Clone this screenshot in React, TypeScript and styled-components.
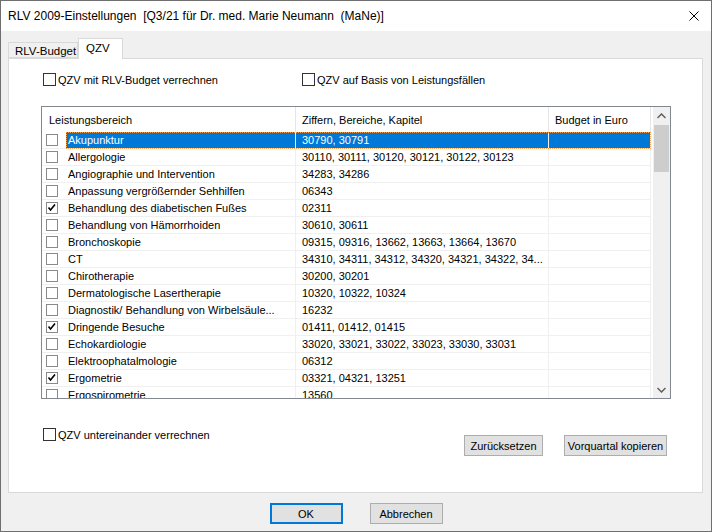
import React from 'react';
import styled, { createGlobalStyle } from 'styled-components';

const GlobalStyle = createGlobalStyle`
  html, body {
    margin: 0;
    padding: 0;
    background: #ffffff;
  }
  body {
    font-family: "Liberation Sans", Arial, sans-serif;
    font-size: 11px;
    color: #000000;
  }
`;

const Window = styled.div`
  width: 712px;
  height: 532px;
  box-sizing: border-box;
  border: 1px solid #6f6f6f;
  background: #f0f0f0;
  display: flex;
  flex-direction: column;
`;

const TitleBar = styled.div`
  height: 30px;
  flex-shrink: 0;
  background: #ffffff;
  display: flex;
  align-items: center;
  justify-content: space-between;
  padding-left: 7px;
`;

const Title = styled.span`
  font-size: 12px;
  white-space: pre;
`;

const CloseButton = styled.div`
  width: 30px;
  height: 30px;
  margin-right: 2px;
  display: flex;
  align-items: center;
  justify-content: center;
`;

const Body = styled.div`
  flex: 1;
  display: flex;
  flex-direction: column;
  padding: 7px 8px 0 7px;
`;

const TabStrip = styled.div`
  display: flex;
  align-items: flex-end;
  height: 20px;
  position: relative;
  z-index: 1;
`;

const Tab = styled.div<{ $active?: boolean; $width: number }>`
  box-sizing: border-box;
  width: ${p => p.$width}px;
  height: ${p => (p.$active ? 21 : 16)}px;
  margin-bottom: ${p => (p.$active ? -1 : 0)}px;
  border: 1px solid #d9d9d9;
  border-bottom: ${p => (p.$active ? 'none' : '1px solid #d9d9d9')};
  background: ${p => (p.$active ? '#ffffff' : '#f0f0f0')};
  padding: ${p => (p.$active ? '3px 0 0 7px' : '2px 0 0 6px')};
  font-size: 11.5px;
  line-height: 13px;
  white-space: nowrap;
  overflow: hidden;
`;

const Panel = styled.div`
  height: 435px;
  box-sizing: border-box;
  border: 1px solid #d9d9d9;
  background: #ffffff;
  display: flex;
  flex-direction: column;
`;

const OptionRow = styled.div`
  display: grid;
  grid-template-columns: 259px auto;
  margin: 14px 0 0 34px;
`;

const CheckLabel = styled.label`
  display: flex;
  align-items: center;
  gap: 2px;
  height: 13px;
  white-space: nowrap;
`;

const Box = styled.span`
  box-sizing: border-box;
  width: 13px;
  height: 13px;
  border: 1px solid #333333;
  background: #ffffff;
  flex-shrink: 0;
`;

const Table = styled.div`
  box-sizing: border-box;
  width: 630px;
  height: 293px;
  margin: 20px 0 0 32px;
  border: 1px solid #828790;
  display: flex;
  overflow: hidden;
`;

const GridArea = styled.div`
  flex: 1;
  overflow: hidden;
`;

const HeaderRow = styled.div`
  display: flex;
  height: 25px;
`;

const HeaderCell = styled.div<{ $width: number; $pad: number }>`
  box-sizing: border-box;
  width: ${p => p.$width}px;
  padding-left: ${p => p.$pad}px;
  border-right: 1px solid #e5e5e5;
  display: flex;
  align-items: center;
  white-space: nowrap;
`;

const Row = styled.div`
  display: flex;
  height: 17px;
`;

const CheckCell = styled.div`
  box-sizing: border-box;
  width: 24px;
  height: 17px;
  border-bottom: 1px solid #f0f0f0;
  padding: 2px 0 0 4px;
`;

const RowBody = styled.div<{ $selected?: boolean }>`
  display: flex;
  background: ${p => (p.$selected ? '#0078d7' : '#ffffff')};
  color: ${p => (p.$selected ? '#ffffff' : '#000000')};
  outline: ${p => (p.$selected ? '1px dotted #f2a04e' : 'none')};
  outline-offset: -1px;
`;

const Cell = styled.div<{ $width: number; $pad: number }>`
  box-sizing: border-box;
  width: ${p => p.$width}px;
  height: 17px;
  padding-left: ${p => p.$pad}px;
  border-right: 1px solid #f0f0f0;
  border-bottom: 1px solid #f0f0f0;
  line-height: 16px;
  white-space: nowrap;
  overflow: hidden;
`;

const RowBox = styled.span`
  display: block;
  box-sizing: border-box;
  width: 12px;
  height: 12px;
  border: 1px solid #8a8a8a;
  background: #ffffff;
  position: relative;
`;

const ScrollBar = styled.div`
  width: 17px;
  margin-left: 2px;
  background: #f0f0f0;
  display: flex;
  flex-direction: column;
  align-items: center;
`;

const ScrollArrow = styled.div`
  width: 17px;
  height: 17px;
  display: flex;
  align-items: center;
  justify-content: center;
`;

const ScrollThumb = styled.div`
  width: 15px;
  height: 47px;
  margin-top: 1px;
  background: #cdcdcd;
`;

const ScrollTrack = styled.div`
  flex: 1;
`;

const BottomRow = styled.div`
  display: flex;
  align-items: flex-start;
  margin: 29px 35px 0 34px;
`;

const ActionButtons = styled.div`
  display: flex;
  gap: 21px;
  margin-left: auto;
  margin-top: 7px;
`;

const Button = styled.button<{ $width: number; $default?: boolean }>`
  box-sizing: border-box;
  width: ${p => p.$width}px;
  height: 21px;
  padding: 0;
  border: ${p => (p.$default ? '2px solid #0078d7' : '1px solid #adadad')};
  background: #e1e1e1;
  font-family: "Liberation Sans", Arial, sans-serif;
  font-size: 11px;
  color: #000000;
`;

const Footer = styled.div`
  display: flex;
  justify-content: center;
  gap: 27px;
  margin-top: 10px;
  padding-left: 1px;
`;

type Entry = {
  name: string;
  codes: string;
  checked?: boolean;
};

const entries: Entry[] = [
  { name: 'Akupunktur', codes: '30790, 30791' },
  { name: 'Allergologie', codes: '30110, 30111, 30120, 30121, 30122, 30123' },
  { name: 'Angiographie und Intervention', codes: '34283, 34286' },
  { name: 'Anpassung vergrößernder Sehhilfen', codes: '06343' },
  { name: 'Behandlung des diabetischen Fußes', codes: '02311', checked: true },
  { name: 'Behandlung von Hämorrhoiden', codes: '30610, 30611' },
  { name: 'Bronchoskopie', codes: '09315, 09316, 13662, 13663, 13664, 13670' },
  { name: 'CT', codes: '34310, 34311, 34312, 34320, 34321, 34322, 34...' },
  { name: 'Chirotherapie', codes: '30200, 30201' },
  { name: 'Dermatologische Lasertherapie', codes: '10320, 10322, 10324' },
  { name: 'Diagnostik/ Behandlung von Wirbelsäule...', codes: '16232' },
  { name: 'Dringende Besuche', codes: '01411, 01412, 01415', checked: true },
  { name: 'Echokardiologie', codes: '33020, 33021, 33022, 33023, 33030, 33031' },
  { name: 'Elektroophatalmologie', codes: '06312' },
  { name: 'Ergometrie', codes: '03321, 04321, 13251', checked: true },
  { name: 'Ergospirometrie', codes: '13560' },
];

const Tick = () => (
  <svg width="10" height="10" viewBox="0 0 10 10" style={{ position: 'absolute', left: 0, top: 0 }}>
    <polyline points="1.5,4.5 3.5,7 8,1.5" fill="none" stroke="#000" strokeWidth="1.6" />
  </svg>
);

const App: React.FC = () => {
  return (
    <>
      <GlobalStyle />
      <Window>
        <TitleBar>
          <Title>RLV 2009-Einstellungen  [Q3/21 für Dr. med. Marie Neumann  (MaNe)]</Title>
          <CloseButton>
            <svg width="10" height="10" viewBox="0 0 10 10">
              <path d="M0.5 0.5 L9.5 9.5 M9.5 0.5 L0.5 9.5" stroke="#000" strokeWidth="1" />
            </svg>
          </CloseButton>
        </TitleBar>
        <Body>
          <TabStrip>
            <Tab $width={70}>RLV-Budget</Tab>
            <Tab $width={45} $active>QZV</Tab>
          </TabStrip>
          <Panel>
            <OptionRow>
              <CheckLabel>
                <Box />
                QZV mit RLV-Budget verrechnen
              </CheckLabel>
              <CheckLabel>
                <Box />
                QZV auf Basis von Leistungsfällen
              </CheckLabel>
            </OptionRow>
            <Table>
              <GridArea>
                <HeaderRow>
                  <HeaderCell $width={254} $pad={7}>Leistungsbereich</HeaderCell>
                  <HeaderCell $width={253} $pad={6}>Ziffern, Bereiche, Kapitel</HeaderCell>
                  <HeaderCell $width={102} $pad={6}>Budget in Euro</HeaderCell>
                </HeaderRow>
                {entries.map((entry, i) => (
                  <Row key={entry.name}>
                    <CheckCell>
                      <RowBox>{entry.checked && <Tick />}</RowBox>
                    </CheckCell>
                    <RowBody $selected={i === 0}>
                      <Cell $width={230} $pad={2}>{entry.name}</Cell>
                      <Cell $width={253} $pad={6}>{entry.codes}</Cell>
                      <Cell $width={102} $pad={6} />
                    </RowBody>
                  </Row>
                ))}
              </GridArea>
              <ScrollBar>
                <ScrollArrow>
                  <svg width="9" height="6" viewBox="0 0 9 6">
                    <polyline points="0.5,5 4.5,1 8.5,5" fill="none" stroke="#606060" strokeWidth="1.5" />
                  </svg>
                </ScrollArrow>
                <ScrollThumb />
                <ScrollTrack />
                <ScrollArrow>
                  <svg width="9" height="6" viewBox="0 0 9 6">
                    <polyline points="0.5,1 4.5,5 8.5,1" fill="none" stroke="#606060" strokeWidth="1.5" />
                  </svg>
                </ScrollArrow>
              </ScrollBar>
            </Table>
            <BottomRow>
              <CheckLabel>
                <Box />
                QZV untereinander verrechnen
              </CheckLabel>
              <ActionButtons>
                <Button $width={79}>Zurücksetzen</Button>
                <Button $width={103}>Vorquartal kopieren</Button>
              </ActionButtons>
            </BottomRow>
          </Panel>
          <Footer>
            <Button $width={73} $default>OK</Button>
            <Button $width={73}>Abbrechen</Button>
          </Footer>
        </Body>
      </Window>
    </>
  );
};

export default App;
